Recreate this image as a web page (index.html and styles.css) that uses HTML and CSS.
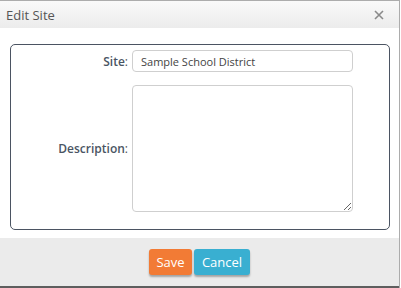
FILE: index.html
```html
<!DOCTYPE html>
<html lang="en">
<head>
    <meta charset="UTF-8">
    <title>Edit Site</title>
    <link rel="stylesheet" href="styles.css">
</head>
<body>
    <div class="dialog">
        <div class="dialog-header">
            <span class="dialog-title">Edit Site</span>
            <button class="close-btn" aria-label="Close">
                <svg width="10" height="10" viewBox="0 0 10 10">
                    <path d="M1 1L9 9M9 1L1 9" stroke="#8a8a8a" stroke-width="1.6"/>
                </svg>
            </button>
        </div>
        <div class="dialog-body">
            <fieldset class="site-form">
                <label class="field-label" for="site"><b>Site</b>:</label>
                <input type="text" id="site" class="text-input" value="Sample School District">
                <label class="field-label" for="description"><b>Description</b>:</label>
                <textarea id="description" class="text-area"></textarea>
            </fieldset>
        </div>
        <div class="dialog-footer">
            <button class="btn btn-save">Save</button>
            <button class="btn btn-cancel">Cancel</button>
        </div>
    </div>
</body>
</html>
```
FILE: styles.css
```css
body {
    margin: 0;
    background: #fff;
    font-family: "Open Sans", Arial, sans-serif;
}

.dialog {
    width: 400px;
    height: 288px;
    border-top: 1px solid #acacac;
    border-right: 1px solid #acacac;
    display: flex;
    flex-direction: column;
    box-sizing: border-box;
}

.dialog-header {
    height: 27px;
    display: flex;
    align-items: center;
    justify-content: space-between;
    padding: 0 15px 0 6px;
    background: linear-gradient(#f9f9f9, #ececec);
}

.dialog-title {
    font-size: 13px;
    color: #555;
}

.close-btn {
    background: none;
    border: none;
    padding: 0;
    width: 10px;
    height: 10px;
    display: flex;
    cursor: pointer;
}

.dialog-body {
    height: 210px;
    padding: 16px 10px 8px 10px;
    box-sizing: border-box;
    background: #fff;
}

.site-form {
    margin: 0;
    height: 186px;
    box-sizing: border-box;
    border: 1px solid #4b5462;
    border-radius: 5px;
    padding: 5px 36px 0 0;
    display: grid;
    grid-template-columns: 117px 221px;
    grid-template-rows: 22px 127px;
    column-gap: 4px;
    row-gap: 13px;
    justify-content: end;
}

.field-label {
    font-size: 12px;
    color: #555;
    text-align: right;
    align-self: center;
}

.field-label b {
    font-weight: 600;
    color: #4a5563;
}

.text-input,
.text-area {
    box-sizing: border-box;
    border: 1px solid #cfcfcf;
    border-radius: 4px;
    font-family: "Open Sans", Arial, sans-serif;
    color: #444;
    margin: 0;
    outline: none;
}

.text-input {
    height: 22px;
    padding: 0 8px;
    font-size: 11px;
}

.text-area {
    height: 127px;
    resize: both;
}

.dialog-footer {
    flex: 1;
    background: #ebebeb;
    border-bottom: 2px solid #5e5e5e;
    display: flex;
    justify-content: center;
    align-items: flex-start;
    padding-top: 11px;
    gap: 2px;
}

.btn {
    border: none;
    border-radius: 3px;
    height: 26px;
    padding: 0 7px;
    font-family: "Open Sans", Arial, sans-serif;
    font-size: 13px;
    color: #fff;
    box-shadow: 0 2px 2px rgba(0, 0, 0, 0.3);
    cursor: pointer;
}

.btn-save {
    background: #f27b35;
    width: 43px;
}

.btn-cancel {
    background: #39afd1;
    width: 56px;
}
```
